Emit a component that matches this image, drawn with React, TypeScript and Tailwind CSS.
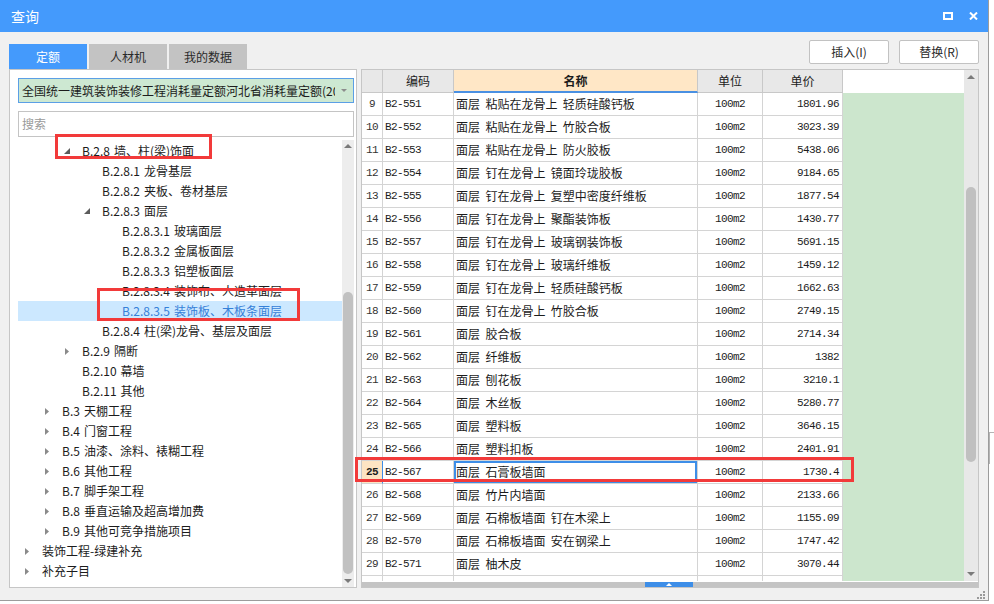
import React from "react";

interface TreeNode {
  level: number;
  arrow?: "open" | "closed";
  text: string;
  selected?: boolean;
}

const tree: TreeNode[] = [
  { level: 2, arrow: "open", text: "B.2.8 墙、柱(梁)饰面" },
  { level: 3, text: "B.2.8.1 龙骨基层" },
  { level: 3, text: "B.2.8.2 夹板、卷材基层" },
  { level: 3, arrow: "open", text: "B.2.8.3 面层" },
  { level: 4, text: "B.2.8.3.1 玻璃面层" },
  { level: 4, text: "B.2.8.3.2 金属板面层" },
  { level: 4, text: "B.2.8.3.3 铝塑板面层" },
  { level: 4, text: "B.2.8.3.4 装饰布、人造革面层" },
  { level: 4, text: "B.2.8.3.5 装饰板、木板条面层", selected: true },
  { level: 3, text: "B.2.8.4 柱(梁)龙骨、基层及面层" },
  { level: 2, arrow: "closed", text: "B.2.9 隔断" },
  { level: 2, text: "B.2.10 幕墙" },
  { level: 2, text: "B.2.11 其他" },
  { level: 1, arrow: "closed", text: "B.3 天棚工程" },
  { level: 1, arrow: "closed", text: "B.4 门窗工程" },
  { level: 1, arrow: "closed", text: "B.5 油漆、涂料、裱糊工程" },
  { level: 1, arrow: "closed", text: "B.6 其他工程" },
  { level: 1, arrow: "closed", text: "B.7 脚手架工程" },
  { level: 1, arrow: "closed", text: "B.8 垂直运输及超高增加费" },
  { level: 1, arrow: "closed", text: "B.9 其他可竞争措施项目" },
  { level: 0, arrow: "closed", text: "装饰工程-绿建补充" },
  { level: 0, arrow: "closed", text: "补充子目" },
];

// [行号, 编码, 名称, 单价]
const rows: [number, string, string, string][] = [
  [9, "B2-551", "面层  粘贴在龙骨上  轻质硅酸钙板", "1801.96"],
  [10, "B2-552", "面层  粘贴在龙骨上  竹胶合板", "3023.39"],
  [11, "B2-553", "面层  粘贴在龙骨上  防火胶板", "5438.06"],
  [12, "B2-554", "面层  钉在龙骨上  镜面玲珑胶板", "9184.65"],
  [13, "B2-555", "面层  钉在龙骨上  复塑中密度纤维板", "1877.54"],
  [14, "B2-556", "面层  钉在龙骨上  聚酯装饰板", "1430.77"],
  [15, "B2-557", "面层  钉在龙骨上  玻璃钢装饰板", "5691.15"],
  [16, "B2-558", "面层  钉在龙骨上  玻璃纤维板", "1459.12"],
  [17, "B2-559", "面层  钉在龙骨上  轻质硅酸钙板", "1662.63"],
  [18, "B2-560", "面层  钉在龙骨上  竹胶合板", "2749.15"],
  [19, "B2-561", "面层  胶合板", "2714.34"],
  [20, "B2-562", "面层  纤维板", "1382"],
  [21, "B2-563", "面层  刨花板", "3210.1"],
  [22, "B2-564", "面层  木丝板", "5280.77"],
  [23, "B2-565", "面层  塑料板", "3646.15"],
  [24, "B2-566", "面层  塑料扣板", "2401.91"],
  [25, "B2-567", "面层  石膏板墙面", "1730.4"],
  [26, "B2-568", "面层  竹片内墙面", "2133.66"],
  [27, "B2-569", "面层  石棉板墙面  钉在木梁上", "1155.09"],
  [28, "B2-570", "面层  石棉板墙面  安在钢梁上", "1747.42"],
  [29, "B2-571", "面层  柚木皮", "3070.44"],
  [30, "", "", ""],
];

const UpArrow = ({ color = "#7a7a7a" }: { color?: string }) => (
  <svg width="8" height="4" viewBox="0 0 8 4">
    <polygon points="0,4 4,0 8,4" fill={color} />
  </svg>
);

const DownArrow = ({ color = "#7a7a7a" }: { color?: string }) => (
  <svg width="8" height="4" viewBox="0 0 8 4">
    <polygon points="0,0 8,0 4,4" fill={color} />
  </svg>
);

export default function App() {
  return (
    <div className="w-[994px] h-[604px] bg-white flex relative overflow-hidden font-['Noto_Sans_CJK_SC','Noto_Sans',sans-serif] text-[#1c1c1c]">
      {/* 窗口 */}
      <div className="w-[989px] h-[601px] flex flex-col bg-[#f0f0f0] border-r border-b border-[#9c9c9c]">
        {/* 标题栏 */}
        <div className="h-[32px] shrink-0 bg-[#449afc] flex items-center justify-between pl-[11px] pr-[10px] text-white text-[14px]">
          <span>查询</span>
          <div className="flex items-center gap-[16px]">
            <svg width="10" height="8" viewBox="0 0 10 8">
              <rect x="1" y="1" width="8" height="6" fill="none" stroke="#fff" strokeWidth="2" />
            </svg>
            <svg width="9" height="8" viewBox="0 0 9 8">
              <path d="M1 0.5 L8 7.5 M8 0.5 L1 7.5" stroke="#fff" strokeWidth="2" />
            </svg>
          </div>
        </div>

        <div className="flex-1 flex flex-col px-[9px]">
          {/* 页签 + 按钮 */}
          <div className="h-[37px] flex items-end justify-between">
            <div className="flex items-end gap-[2px] text-[12px]">
              <div className="w-[78px] h-[25px] bg-[#449afc] text-white flex items-center justify-center">定额</div>
              <div className="w-[78px] h-[25px] bg-[#c3c3c3] text-[#2a2a2a] flex items-center justify-center">人材机</div>
              <div className="w-[78px] h-[25px] bg-[#c3c3c3] text-[#2a2a2a] flex items-center justify-center">我的数据</div>
            </div>
            <div className="self-start mt-[8px] flex gap-[10px] text-[12px]">
              <button className="w-[80px] h-[24px] bg-white border border-[#c2c2c2] rounded-[2px] text-[#2a2a2a]">插入(I)</button>
              <button className="w-[80px] h-[24px] bg-white border border-[#c2c2c2] rounded-[2px] text-[#2a2a2a]">替换(R)</button>
            </div>
          </div>

          <div className="h-[519px] flex gap-[4px]">
            {/* 左侧定额树 */}
            <div className="w-[348px] bg-white border border-[#c6c6c6] flex flex-col pl-[8px] pr-[2px] text-[12px]">
              <div className="mt-[8px] h-[25px] border border-[#5b9fe6] bg-[#cde8d2] flex items-center">
                <div className="flex-1 pl-[3px] overflow-hidden whitespace-nowrap">
                  全国统一建筑装饰装修工程消耗量定额河北省消耗量定额(2012)
                </div>
                <div className="w-[18px] flex items-center justify-center">
                  <svg width="6" height="3" viewBox="0 0 6 3">
                    <polygon points="0,0 6,0 3,3" fill="#8c8c8c" />
                  </svg>
                </div>
              </div>
              <div className="mt-[8px] h-[26px] border border-[#c4c4c4] bg-white pl-[3px] flex items-center text-[#9a9a9a]">
                搜索
              </div>
              <div className="mt-[3px] flex-1 flex">
                <div className="flex-1 pt-[1px]">
                  {tree.map((n, i) => {
                    const sp = n.text.indexOf(" ");
                    const code = sp > 0 ? n.text.slice(0, sp) : "";
                    const label = sp > 0 ? n.text.slice(sp + 1) : n.text;
                    return (
                      <div
                        key={i}
                        className={`h-[20px] flex items-center whitespace-nowrap ${n.selected ? "bg-[#cce8ff] text-[#3580d8]" : ""}`}
                        style={{ paddingLeft: n.level * 20 }}
                      >
                        <div className="w-[24px] flex items-center">
                          {n.arrow === "open" && (
                            <svg width="6" height="6" viewBox="0 0 6 6" className="ml-[6px]">
                              <polygon points="6,0 6,6 0,6" fill="#5c5c5c" />
                            </svg>
                          )}
                          {n.arrow === "closed" && (
                            <svg width="4" height="7" viewBox="0 0 4 7" className="ml-[7px]">
                              <polygon points="0,0 4,3.5 0,7" fill="#8a8a8a" />
                            </svg>
                          )}
                        </div>
                        {code && <span className="mr-[4px]">{code}</span>}
                        <span>{label}</span>
                      </div>
                    );
                  })}
                </div>
                <div className="w-[12px] bg-[#ededed] flex flex-col">
                  <div className="h-[12px] flex items-center justify-center"><UpArrow /></div>
                  <div className="h-[140px]" />
                  <div className="h-[282px] mx-[1px] rounded-full bg-[#c1c1c1]" />
                  <div className="flex-1" />
                  <div className="h-[12px] flex items-center justify-center"><DownArrow /></div>
                </div>
              </div>
            </div>

            {/* 右侧表格 */}
            <div className="w-[618px] bg-white border border-[#c6c6c6] flex flex-col">
              <div className="h-[511px] flex">
                <div className="w-[481px] flex flex-col overflow-hidden">
                  <div className="h-[23px] shrink-0 flex text-[12px]">
                    <div className="w-[21px] bg-[#e8e8e8] border-r border-b border-[#c8c8c8]" />
                    <div className="w-[71px] bg-[#e8e8e8] border-r border-b border-[#c8c8c8] flex items-center justify-center">编码</div>
                    <div className="w-[244px] bg-[#ffe7c6] border-r border-[#c8c8c8] border-b-2 border-b-[#4a90e2] flex items-center justify-center font-bold">名称</div>
                    <div className="w-[65px] bg-[#e8e8e8] border-r border-b border-[#c8c8c8] flex items-center justify-center">单位</div>
                    <div className="w-[80px] bg-[#e8e8e8] border-r border-b border-[#c8c8c8] flex items-center justify-center">单价</div>
                  </div>
                  {rows.map(([no, code, name, price]) => {
                    const active = no === 25;
                    return (
                      <div key={no} className="h-[23px] shrink-0 flex">
                        <div
                          className={`w-[21px] border-b border-[#d4d4d4] flex items-center justify-center font-['Liberation_Mono',monospace] text-[11px] tracking-[-0.6px] ${active ? "bg-[#fde4c3] font-bold border-r border-r-[#3d8ee8]" : "border-r text-[#333]"}`}
                        >
                          {code ? no : ""}
                        </div>
                        <div className="w-[71px] border-r border-b border-[#d4d4d4] flex items-center pl-[2px] font-['Liberation_Mono',monospace] text-[11px] tracking-[-0.6px]">
                          {code}
                        </div>
                        <div
                          className={`w-[244px] border-r border-b border-[#d4d4d4] flex items-center pl-[2px] text-[12px] whitespace-pre ${active ? "shadow-[inset_0_0_0_2px_#3d8ee8]" : ""}`}
                        >
                          {name}
                        </div>
                        <div className="w-[65px] border-r border-b border-[#d4d4d4] flex items-center justify-center font-['Liberation_Mono',monospace] text-[11px] tracking-[-0.6px]">
                          {code ? "100m2" : ""}
                        </div>
                        <div className="w-[80px] border-r border-b border-[#d4d4d4] flex items-center justify-end pr-[3px] font-['Liberation_Mono',monospace] text-[11px] tracking-[-0.6px]">
                          {price}
                        </div>
                      </div>
                    );
                  })}
                </div>
                <div className="flex-1 flex flex-col">
                  <div className="h-[23px] bg-white" />
                  <div className="flex-1 bg-[#cce6cd]" />
                </div>
                <div className="w-[14px] bg-[#e8e8e8] flex flex-col">
                  <div className="h-[14px] flex items-center justify-center"><UpArrow /></div>
                  <div className="h-[103px]" />
                  <div className="h-[275px] mx-[2px] rounded-full bg-[#c0c0c0]" />
                  <div className="flex-1" />
                  <div className="h-[14px] flex items-center justify-center"><DownArrow /></div>
                </div>
              </div>
              <div className="flex-1 flex bg-[#c4c4c4] border-t border-white">
                <div className="w-[283px]" />
                <div className="w-[48px] bg-[#3d8ee8] flex items-center justify-center">
                  <svg width="6" height="3" viewBox="0 0 6 3">
                    <polygon points="0,3 3,0 6,3" fill="#fff" />
                  </svg>
                </div>
              </div>
            </div>
          </div>

          {/* 底部拖拽角 */}
          <div className="flex-1 flex justify-end items-center -mr-[6px]">
            <svg width="9" height="9" viewBox="0 0 9 9">
              <rect x="7" y="1" width="2" height="2" fill="#9a9a9a" />
              <rect x="4" y="4" width="2" height="2" fill="#9a9a9a" />
              <rect x="7" y="4" width="2" height="2" fill="#9a9a9a" />
              <rect x="1" y="7" width="2" height="2" fill="#9a9a9a" />
              <rect x="4" y="7" width="2" height="2" fill="#9a9a9a" />
              <rect x="7" y="7" width="2" height="2" fill="#9a9a9a" />
            </svg>
          </div>
        </div>
      </div>

      {/* 窗口外背景 */}
      <div className="flex-1">
        <div className="mt-[432px] h-[32px] border-t border-l border-[#b4b4b4]" />
      </div>

      {/* 红色标注框 */}
      <div className="absolute left-[55px] top-[134px] w-[157px] h-[25px] border-[3px] border-[#f23a3a]" />
      <div className="absolute left-[97px] top-[288px] w-[203px] h-[33px] border-[3px] border-[#f23a3a]" />
      <div className="absolute left-[355px] top-[457px] w-[499px] h-[25px] border-[3px] border-[#f23a3a]" />
    </div>
  );
}
